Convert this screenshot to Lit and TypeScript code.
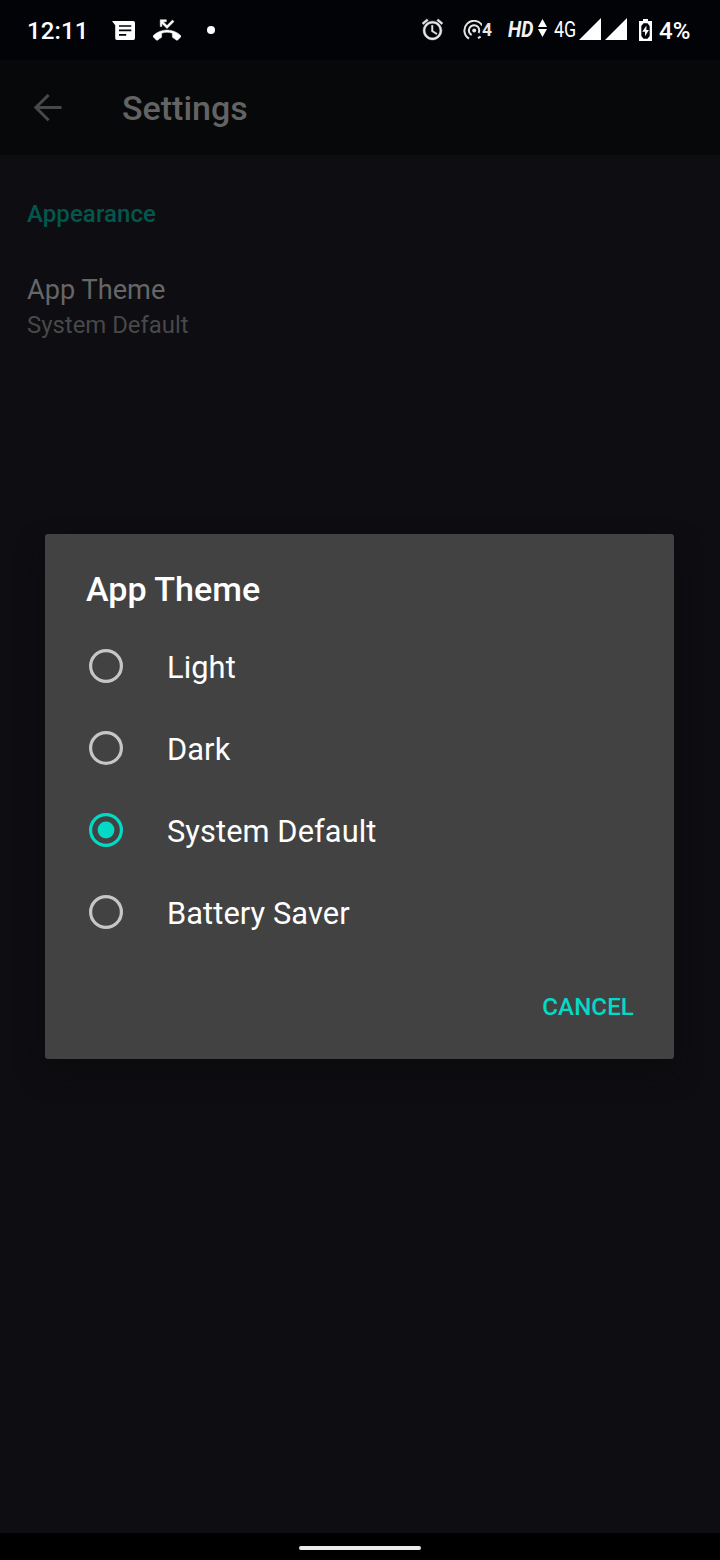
import { LitElement, html, svg, css } from "lit";
import { customElement, property, state } from "lit/decorators.js";
import { classMap } from "lit/directives/class-map.js";

@customElement("status-bar")
class StatusBar extends LitElement {
  static styles = css`
    :host { display: flex; height: 60px; background: #020306; color: #fff; align-items: flex-start; justify-content: space-between; }
    .group { display: flex; align-items: flex-start; height: 60px; }
    .group.left { padding-left: 27px; }
    svg { display: block; fill: #fff; flex: none; }
    span { display: block; flex: none; white-space: nowrap; line-height: 30px; margin-top: 16px; }
    .clock { font-size: 24px; font-weight: 500; letter-spacing: 0.1px; width: 85px; }
    .message { margin-top: 21px; }
    .missed { margin: 16px 0 0 18px; stroke: #fff; stroke-width: 0.4; }
    .dot { margin: 26px 0 0 26px; width: 8px; height: 8px; border-radius: 50%; background: #fff; }
    .alarm { margin-top: 17px; fill: #e6e6e6; stroke: #e6e6e6; stroke-width: 0.4; }
    .hotspot { margin: 20px 0 0 18px; }
    .sim { font-size: 19px; font-weight: 700; width: 26px; margin-top: 15px; color: #e6e6e6; }
    .hd { font-size: 22px; font-weight: 700; font-style: italic; width: 30px; margin-top: 15px; color: #f2f2f2; }
    span b { display: inline-block; font-weight: inherit; transform-origin: left; }
    .sim b { transform: scaleX(0.92); }
    .hd b { transform: scaleX(0.88); }
    .arrows { margin: 19px 7px 0 0; }
    .net { font-size: 21.5px; width: 25px; margin-top: 15px; }
    .net b { transform: scaleX(0.83); }
    .signal { margin: 18px 4px 0 0; }
    .battery { margin: 19px 7px 0 8px; }
    .percent { font-size: 24px; font-weight: 500; width: 61px; }
  `;

  render() {
    const bars = html`<svg class="signal" width="22" height="22" viewBox="0 0 22 22"><path d="M22 0V22H0Z" /></svg>`;
    return html`
      <div class="group left">
        <span class="clock">12:11</span>
        <svg class="message" width="23" height="19" viewBox="0 0 23 19">
          <path fill-rule="evenodd" d="M0 0H21.3Q23 0 23 1.7V17.3Q23 19 21.3 19H4.9Q3.2 19 3.2 17.3V4.2ZM7 4.2V5.8H19.3V4.2ZM7 8.6V10.2H19.3V8.6ZM7 13V14.8H14.2V13Z" />
        </svg>
        <svg class="missed" width="28" height="28" viewBox="0 0 24 24">
          <path d="M23.71 16.67C20.66 13.78 16.54 12 12 12 7.46 12 3.34 13.78.29 16.67c-.18.18-.29.43-.29.71s.11.53.29.71l2.48 2.48c.18.18.43.29.71.29.27 0 .52-.11.7-.28.79-.74 1.69-1.36 2.66-1.85.33-.16.56-.5.56-.9v-3.1C8.85 14.25 10.4 14 12 14s3.15.25 4.6.72v3.1c0 .39.23.74.56.9.98.49 1.87 1.12 2.67 1.85.18.18.43.28.7.28.28 0 .53-.11.71-.29l2.48-2.48c.18-.18.29-.43.29-.71s-.12-.52-.3-.7zM7.6 6.4 12 10.8l6-6-1.3-1.3L12 8.2l-3.2-3.2H11.4V3.2H6.2V9h1.4V6.4z" />
        </svg>
        <div class="dot"></div>
      </div>
      <div class="group">
        <svg class="alarm" width="25" height="25" viewBox="0 0 24 24">
          <path d="M22 5.72l-4.6-3.86-1.29 1.53 4.6 3.86L22 5.72zM7.88 3.39L6.6 1.86 2 5.71l1.29 1.53 4.59-3.85zM12.5 8H11v6l4.75 2.85.75-1.23-4-2.37V8zM12 4c-4.97 0-9 4.03-9 9s4.02 9 9 9c4.97 0 9-4.03 9-9s-4.03-9-9-9zm0 16c-3.87 0-7-3.13-7-7s3.13-7 7-7 7 3.13 7 7-3.13 7-7 7z" />
        </svg>
        <svg class="hotspot" width="19" height="20" viewBox="0 0 19 20">
          <g fill="none" stroke="#e6e6e6" stroke-width="2">
            <path d="M6 18.6A9.6 9.6 0 1 1 19.2 5.4" />
            <path d="M8.6 15A5.2 5.2 0 1 1 15.6 13" />
            <path d="M15 18.2L17.6 16.6" />
          </g>
          <circle cx="11.2" cy="10.6" r="2" fill="#e6e6e6" />
        </svg>
        <span class="sim"><b>4</b></span>
        <span class="hd"><b>HD</b></span>
        <svg class="arrows" width="9" height="18" viewBox="0 0 9 18"><path d="M4.5 0L9 8H0ZM0 10H9L4.5 18Z" /></svg>
        <span class="net"><b>4G</b></span>
        ${bars}${bars}
        <svg class="battery" width="13" height="22" viewBox="0 0 13 22">
          <path fill-rule="evenodd" d="M4 0H9V2H13V22H0V2H4ZM4.5 4.2L2.3 7V17L4.5 19.8H8.5L10.7 17V7L8.5 4.2Z" />
          <path d="M7.4 6.5L3.3 12.8H6V17.3L9.9 11H7.4Z" />
        </svg>
        <span class="percent">4%</span>
      </div>
    `;
  }
}

@customElement("radio-row")
class RadioRow extends LitElement {
  @property() label = "";
  @property({ type: Boolean }) checked = false;

  static styles = css`
    :host { display: flex; align-items: center; height: 82px; padding-left: 44px; cursor: pointer; }
    svg { display: block; flex: none; color: #c6c6c6; }
    svg.on { color: #03dac5; }
    span { margin: 3px 0 0 44px; font-size: 30.8px; line-height: 40px; white-space: nowrap; color: #fff; letter-spacing: 0.08px; }
  `;

  render() {
    return html`
      <svg class=${classMap({ on: this.checked })} width="34" height="34" viewBox="0 0 34 34">
        <circle cx="17" cy="17" r="15.4" fill="none" stroke="currentColor" stroke-width="3.2" />
        ${this.checked ? svg`<circle cx="17" cy="17" r="8.4" fill="currentColor" />` : null}
      </svg>
      <span>${this.label}</span>
    `;
  }
}

@customElement("app-root")
class AppRoot extends LitElement {
  @state() private theme = "System Default";
  private options = ["Light", "Dark", "System Default", "Battery Saver"];

  static styles = css`
    :host { display: block; position: relative; width: 720px; height: 1560px; overflow: hidden; background: #0e0d12; font-family: Roboto, sans-serif; }
    .page { display: flex; flex-direction: column; height: 1560px; }
    .bar { display: flex; align-items: center; height: 95px; background: #070809; color: #636363; }
    .bar svg { margin-left: 34px; flex: none; }
    .bar h1 { margin: 0 0 0 60px; font-size: 34px; font-weight: 500; line-height: 44px; }
    main { flex: 1; padding: 43px 27px 0; }
    h2 { margin: 0; font-size: 24px; font-weight: 500; line-height: 32px; letter-spacing: 0.08px; color: #02574f; }
    .name { margin-top: 42px; font-size: 27.2px; line-height: 36px; color: #666; }
    .value { margin-top: 2px; font-size: 23.9px; line-height: 30px; color: #484849; }
    .nav { display: flex; height: 27px; background: #000; justify-content: center; align-items: flex-start; }
    .pill { width: 122px; height: 4px; margin-top: 13px; border-radius: 2px; background: #ebebeb; }
    .dialog { position: absolute; left: 45px; top: 534px; width: 629px; height: 525px; border-radius: 3px; background: #424242; box-shadow: 0 14px 26px rgba(10, 11, 10, 0.7); display: flex; flex-direction: column; }
    .title { margin: 33px 0 0 41px; font-size: 34.1px; font-weight: 500; line-height: 44px; color: #fff; }
    .rows { margin-top: 14px; }
    .actions { display: flex; justify-content: flex-end; padding: 38px 40px 0 0; }
    button { all: unset; font-size: 24.1px; font-weight: 500; line-height: 32px; letter-spacing: 0.1px; color: #03dac5; cursor: pointer; }
  `;

  render() {
    return html`
      <div class="page">
        <status-bar></status-bar>
        <div class="bar">
          <svg width="28" height="28" viewBox="0 0 28 28" fill="none" stroke="#484848" stroke-width="3">
            <path d="M27.5 13.5H2M14.6 .9L1.8 13.5L14.6 26.3" />
          </svg>
          <h1>Settings</h1>
        </div>
        <main>
          <h2>Appearance</h2>
          <div class="name">App Theme</div>
          <div class="value">${this.theme}</div>
        </main>
        <div class="nav"><div class="pill"></div></div>
      </div>
      <div class="dialog" role="dialog">
        <div class="title">App Theme</div>
        <div class="rows">
          ${this.options.map(
            (o) => html`<radio-row .label=${o} .checked=${o === this.theme} @click=${() => (this.theme = o)}></radio-row>`
          )}
        </div>
        <div class="actions"><button>CANCEL</button></div>
      </div>
    `;
  }
}
